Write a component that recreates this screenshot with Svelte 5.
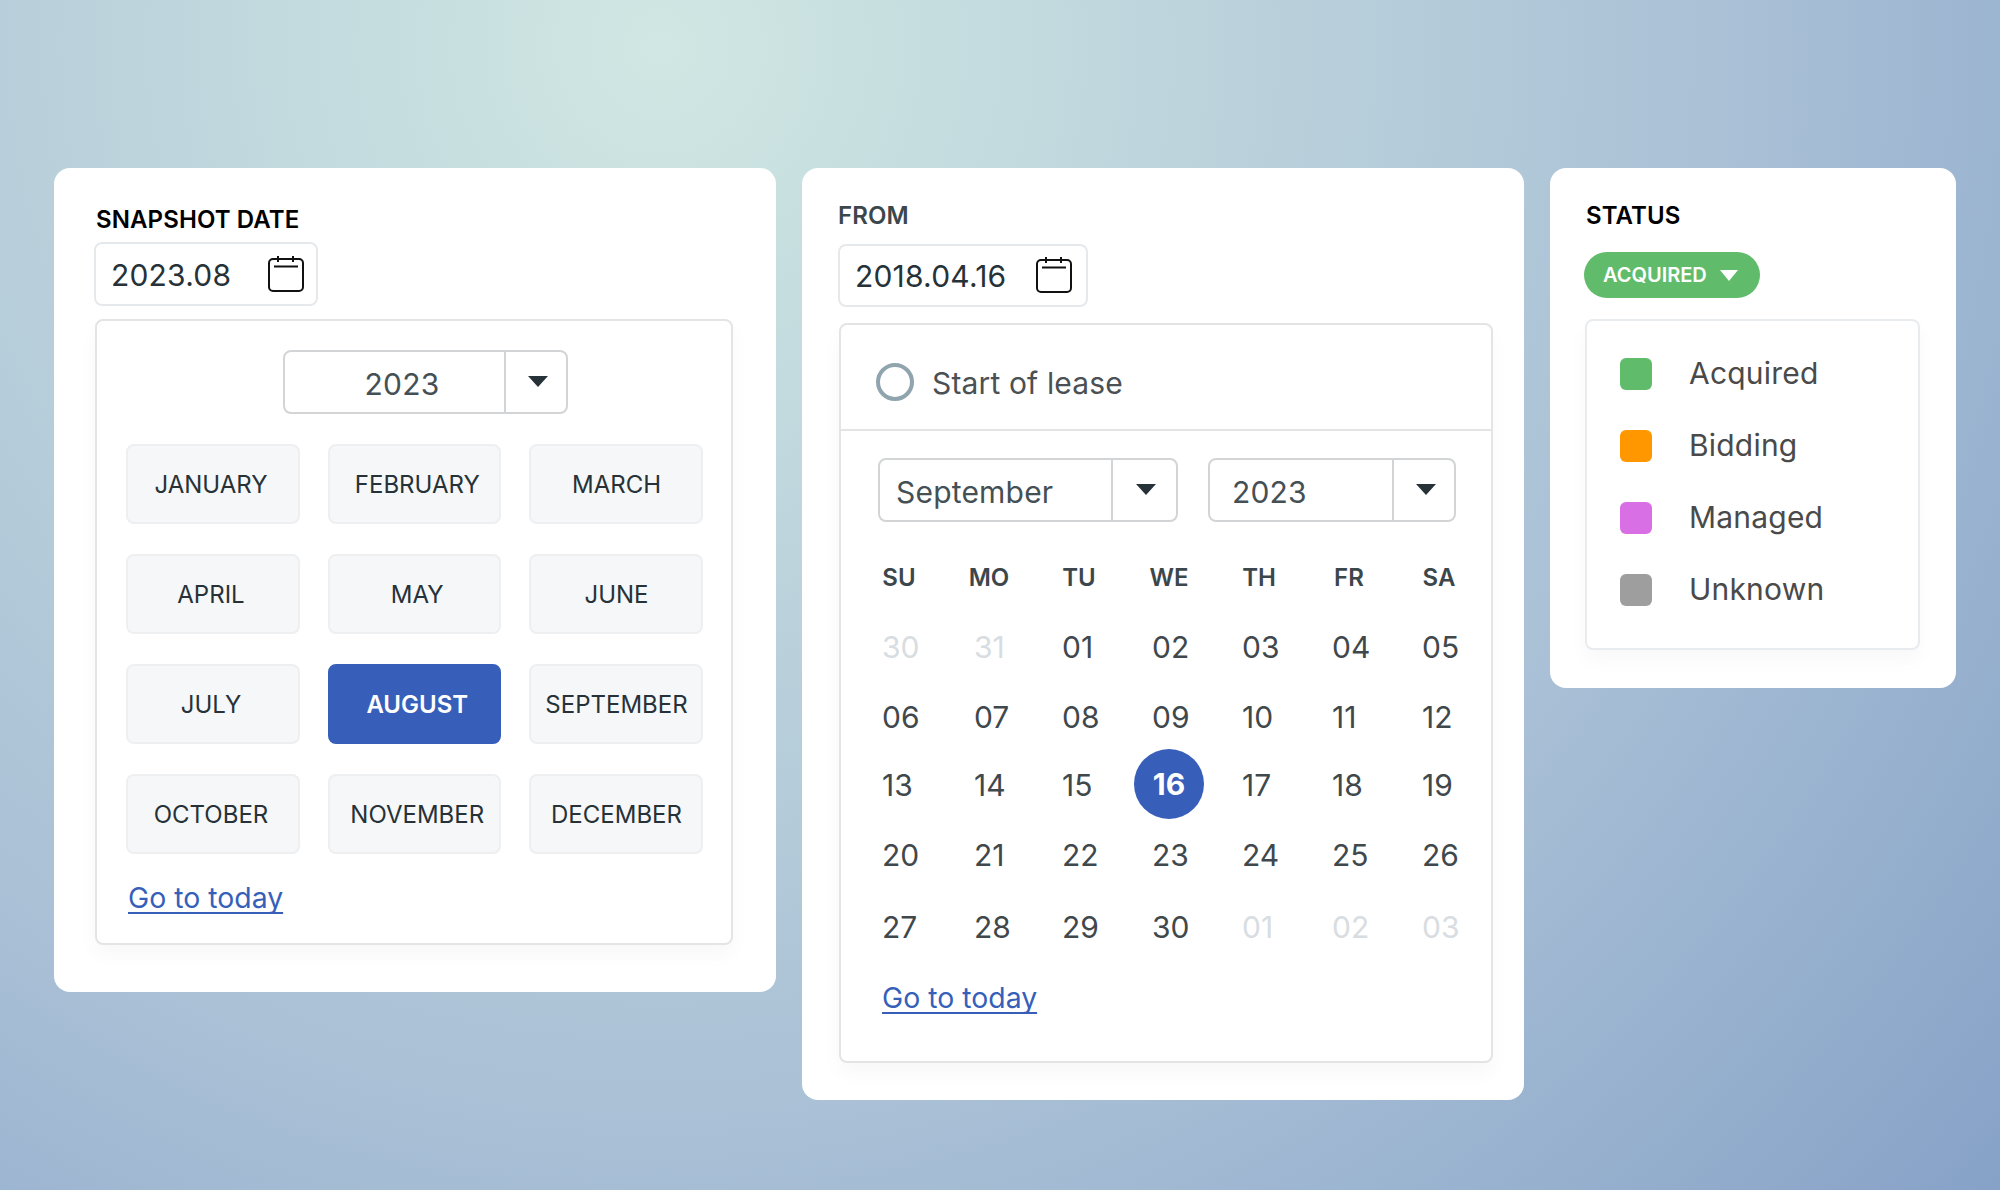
<script>
	const months = [
		'JANUARY', 'FEBRUARY', 'MARCH', 'APRIL', 'MAY', 'JUNE',
		'JULY', 'AUGUST', 'SEPTEMBER', 'OCTOBER', 'NOVEMBER', 'DECEMBER'
	];
	const weekdays = ['SU', 'MO', 'TU', 'WE', 'TH', 'FR', 'SA'];
	const days = [
		['30', 'off'], ['31', 'off'], ['01'], ['02'], ['03'], ['04'], ['05'],
		['06'], ['07'], ['08'], ['09'], ['10'], ['11'], ['12'],
		['13'], ['14'], ['15'], ['16', 'today'], ['17'], ['18'], ['19'],
		['20'], ['21'], ['22'], ['23'], ['24'], ['25'], ['26'],
		['27'], ['28'], ['29'], ['30'], ['01', 'off'], ['02', 'off'], ['03', 'off']
	];
	const statuses = [
		{ label: 'Acquired', color: '#60bc6b' },
		{ label: 'Bidding', color: '#ff9800' },
		{ label: 'Managed', color: '#d96fe5' },
		{ label: 'Unknown', color: '#9e9e9e' }
	];
</script>

{#snippet calendarIcon()}
	<svg class="cal-icon" width="36" height="36" viewBox="0 0 36 36" fill="none" stroke="#111" stroke-width="2">
		<rect x="1" y="3" width="34" height="32" rx="4" />
		<path d="M6 10.5h24M10 0v6M25 0v6" />
	</svg>
{/snippet}

{#snippet caret(color)}
	<svg width="20" height="11" viewBox="0 0 20 11"><path d="M0 0h20L10 11z" fill={color} /></svg>
{/snippet}

{#snippet select(value, cls)}
	<div class="select {cls}">
		<span class="value">{value}</span>
		<span class="arrow">{@render caret('#263238')}</span>
	</div>
{/snippet}

<main class="page">
	<section class="card snapshot">
		<h2>SNAPSHOT DATE</h2>
		<div class="date-input">
			<span>2023.08</span>
			{@render calendarIcon()}
		</div>
		<div class="panel month-panel">
			{@render select('2023', 'year-center')}
			<div class="months">
				{#each months as m}
					<button class:active={m === 'AUGUST'}>{m}</button>
				{/each}
			</div>
			<a href="#today" class="today-link">Go to today</a>
		</div>
	</section>

	<section class="card from">
		<h2>FROM</h2>
		<div class="date-input">
			<span>2018.04.16</span>
			{@render calendarIcon()}
		</div>
		<div class="panel day-panel">
			<div class="lease">
				<span class="radio"></span>
				<span>Start of lease</span>
			</div>
			<div class="calendar">
				<div class="selects">
					{@render select('September', 'sel-month')}
					{@render select('2023', 'sel-year')}
				</div>
				<div class="weekdays">
					{#each weekdays as w}
						<span>{w}</span>
					{/each}
				</div>
				<div class="days">
					{#each days as [d, kind]}
						<div class="day {kind ?? ''}"><span>{d}</span></div>
					{/each}
				</div>
				<a href="#today" class="today-link">Go to today</a>
			</div>
		</div>
	</section>

	<section class="card status">
		<h2>STATUS</h2>
		<div class="pill">
			<span>ACQUIRED</span>
			<svg width="18" height="11" viewBox="0 0 18 11"><path d="M0 0h18L9 11z" fill="#fff" /></svg>
		</div>
		<div class="panel legend">
			{#each statuses as s}
				<div class="legend-row">
					<span class="swatch" style:background={s.color}></span>
					<span class="legend-label">{s.label}</span>
				</div>
			{/each}
		</div>
	</section>
</main>

<style>
	:global(body) {
		font-family: Inter, 'Liberation Sans', sans-serif;
	}

	.page {
		display: flex;
		align-items: flex-start;
		gap: 26px;
		box-sizing: border-box;
		height: 1190px;
		padding: 168px 0 0 54px;
		background: radial-gradient(circle 1800px at 33% 4%, #d0e7e3 0%, #a9c0d6 60%, #84a0c6 100%);
	}

	.card {
		background: #fff;
		border-radius: 16px;
		box-sizing: border-box;
		display: flex;
		flex-direction: column;
		align-items: flex-start;
	}

	h2 {
		margin: 0;
		font-size: 24px;
		line-height: 30px;
		font-weight: 600;
		letter-spacing: 0.1px;
		color: #000;
	}

	.snapshot {
		width: 722px;
		height: 824px;
		padding: 37px 44px 0 40px;
	}
	.snapshot h2 {
		margin: 0 0 7px 2px;
	}
	.from {
		width: 722px;
		height: 932px;
		padding: 33px 30px 0 36px;
	}
	.from h2 {
		margin-bottom: 13px;
		color: #3c474c;
	}
	.status {
		width: 406px;
		height: 520px;
		padding: 33px 36px 0;
	}

	.date-input {
		display: flex;
		align-items: center;
		justify-content: space-between;
		box-sizing: border-box;
		height: 64px;
		padding: 0 12px 0 15px;
		border: 2px solid #e6e9eb;
		border-radius: 8px;
		font-size: 30px;
		letter-spacing: 0.2px;
		color: #263238;
	}
	.date-input span {
		margin-top: 1px;
	}
	.snapshot .date-input {
		width: 224px;
		margin-bottom: 13px;
	}
	.from .date-input {
		width: 250px;
		height: 63px;
		margin-bottom: 16px;
		padding-right: 14px;
	}
	.from .cal-icon {
		margin-top: -2px;
	}

	.panel {
		box-sizing: border-box;
		border: 2px solid #e2e4e6;
		border-radius: 8px;
		background: #fff;
		box-shadow: 0 10px 20px rgba(0, 0, 0, 0.03);
	}

	.month-panel {
		width: 638px;
		height: 626px;
		margin-left: 1px;
		padding: 29px 28px 0 29px;
		display: flex;
		flex-direction: column;
	}
	.months {
		display: grid;
		grid-template-columns: 174px 173.5px 174px;
		gap: 30px 27.5px;
		margin-top: 30px;
	}
	.months button {
		height: 80px;
		padding: 1px 0 0;
		border: 2px solid #eeeff1;
		border-radius: 8px;
		background: #f6f7f9;
		font: inherit;
		font-size: 24px;
		color: #263238;
	}
	.months button:nth-child(3n + 1) {
		padding-right: 4px;
	}
	.months button:nth-child(3n + 2) {
		padding-left: 6px;
	}
	.months button:nth-child(3n) {
		padding-left: 2px;
	}
	.months button.active {
		background: #375fba;
		border-color: #375fba;
		color: #fff;
		font-weight: 600;
	}

	.today-link {
		font-size: 28.4px;
		line-height: 36px;
		color: #375fba;
		text-decoration: underline 2px;
		text-underline-offset: 4px;
		text-decoration-skip-ink: none;
		align-self: flex-start;
	}
	.month-panel .today-link {
		margin: 26px 0 0 2px;
	}

	.select {
		display: flex;
		box-sizing: border-box;
		height: 64px;
		border: 2px solid #d2d4d6;
		border-radius: 8px;
		font-size: 30px;
		color: #455055;
	}
	.value {
		flex: 1;
		display: flex;
		align-items: center;
		padding-top: 4px;
		letter-spacing: 0.2px;
	}
	.arrow {
		display: flex;
		align-items: center;
		justify-content: center;
		border-left: 2px solid #d2d4d6;
		padding: 0 0 2px 3px;
	}
	.year-center {
		width: 285px;
		margin-left: 157px;
	}
	.year-center .value {
		justify-content: center;
		padding-left: 15px;
	}
	.year-center .arrow {
		width: 57px;
	}
	.sel-month {
		width: 300px;
	}
	.sel-month .value {
		padding-left: 16px;
	}
	.sel-month .arrow {
		width: 60px;
	}
	.sel-year {
		width: 248px;
	}
	.sel-year .value {
		padding-left: 22px;
	}
	.sel-year .arrow {
		width: 57px;
	}

	.day-panel {
		width: 654px;
		height: 740px;
		margin-left: 1px;
	}
	.lease {
		display: flex;
		align-items: center;
		gap: 18px;
		box-sizing: border-box;
		height: 106px;
		padding: 12px 0 0 35px;
		border-bottom: 2px solid #e2e4e6;
		font-size: 30px;
		letter-spacing: 0.15px;
		color: #4a5053;
	}
	.radio {
		box-sizing: border-box;
		width: 38px;
		height: 38px;
		border: 4px solid #90a4ae;
		border-radius: 50%;
		margin-top: -3px;
	}
	.calendar {
		display: flex;
		flex-direction: column;
		padding-top: 27px;
	}
	.selects {
		display: flex;
		gap: 30px;
		padding-left: 37px;
	}
	.weekdays,
	.days {
		display: grid;
		grid-template-columns: repeat(7, 90px);
		padding-left: 13px;
	}
	.weekdays {
		margin-top: 41px;
		font-size: 24px;
		line-height: 30px;
		font-weight: 600;
		color: #3c474c;
		text-align: center;
	}
	.days {
		margin-top: 19px;
		grid-template-rows: 70px 70px 66px 74px 70px;
		font-size: 30px;
		color: #3f484c;
	}
	.day {
		display: flex;
		align-items: center;
		padding-left: 28px;
	}
	.day:nth-child(7n + 2) {
		padding-left: 30px;
	}
	.day.off {
		color: #d8dde1;
	}
	.day.today {
		padding-left: 10px;
	}
	.day.today span {
		flex: none;
		display: flex;
		align-items: center;
		justify-content: center;
		width: 70px;
		height: 70px;
		margin-top: -2px;
		border-radius: 50%;
		background: #375fba;
		color: #fff;
		font-weight: 700;
	}
	.calendar .today-link {
		margin: 18px 0 0 41px;
	}

	.status h2 {
		margin-bottom: 21px;
	}
	.pill {
		display: flex;
		align-items: center;
		gap: 13px;
		box-sizing: border-box;
		width: 176px;
		height: 46px;
		margin: 0 0 21px -2px;
		padding-left: 19px;
		border-radius: 23px;
		background: #60bc6b;
		color: #fff;
		font-size: 20px;
		font-weight: 600;
	}
	.legend {
		width: 335px;
		height: 331px;
		margin-left: -1px;
		padding: 37px 0 0 33px;
		display: flex;
		flex-direction: column;
		gap: 40px;
		border-color: #e9ecef;
	}
	.legend-row {
		display: flex;
		align-items: center;
		gap: 37px;
		height: 32px;
		font-size: 30px;
		letter-spacing: 0.2px;
		color: #4a4a4a;
	}
	.legend-label {
		margin-top: -2px;
	}
	.swatch {
		width: 32px;
		height: 32px;
		border-radius: 6px;
	}
</style>
